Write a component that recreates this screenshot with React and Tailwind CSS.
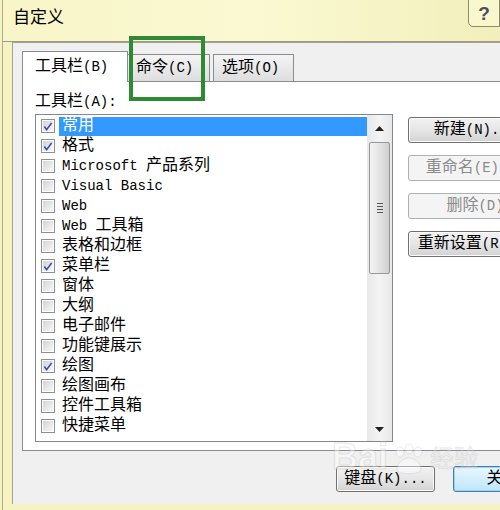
import React from "react";

const ui = '"Liberation Mono", "Noto Sans CJK SC", monospace';

// ascii runs get the narrow mono face, the rest stays CJK
const Mixed = ({ text }) => {
  const parts = text.match(/[\x20-\x7e]+|[^\x20-\x7e]+/g) || [];
  return (
    <span className="whitespace-pre">
      {parts.map((p, i) =>
        /^[\x20-\x7e]+$/.test(p) ? (
          <span key={i} className="text-[14px]">
            {p}
          </span>
        ) : (
          <span key={i}>{p}</span>
        )
      )}
    </span>
  );
};

const items = [
  ["常用", true],
  ["格式", true],
  ["Microsoft 产品系列", false],
  ["Visual Basic", false],
  ["Web", false],
  ["Web 工具箱", false],
  ["表格和边框", false],
  ["菜单栏", true],
  ["窗体", false],
  ["大纲", false],
  ["电子邮件", false],
  ["功能键展示", false],
  ["绘图", true],
  ["绘图画布", false],
  ["控件工具箱", false],
  ["快捷菜单", false],
];

const CheckBox = ({ checked }) => (
  <div className="w-[14px] h-[14px] border border-[#8e8f8f] bg-white p-px shrink-0">
    <div className="w-full h-full bg-gradient-to-br from-[#d4d4d4] to-[#f8f8f8] flex items-center justify-center">
      {checked && (
        <svg width="11" height="11" viewBox="0 0 11 11">
          <path
            d="M1.5 5.5 L4 9 L9.5 1.5"
            fill="none"
            stroke="#3a4ea6"
            strokeWidth="1.8"
          />
        </svg>
      )}
    </div>
  </div>
);

const Button = ({ label, disabled, focused, className = "" }) => (
  <div
    className={`h-[26px] rounded-[3px] border flex items-center justify-center text-[16px] whitespace-nowrap ${
      disabled
        ? "border-[#adb2b5] bg-[#f4f4f4] text-[#8a8a8a]"
        : focused
        ? "border-[#3c7fb1] bg-gradient-to-b from-[#eaf6fd] to-[#bee6fd] text-black shadow-[inset_0_0_0_1px_#9fd2f3]"
        : "border-[#707070] bg-gradient-to-b from-[#f2f2f2] via-[#e6e6e6] to-[#d2d2d2] text-black shadow-[inset_0_0_0_1px_#fbfbfb]"
    } ${className}`}
  >
    <Mixed text={label} />
  </div>
);

const Scrollbar = () => (
  <div className="w-[25px] h-full bg-gradient-to-r from-[#e8e8e8] via-[#f4f4f4] to-[#e8e8e8] flex flex-col items-center">
    <div className="h-[26px] w-full flex items-center justify-center">
      <svg width="9" height="5" viewBox="0 0 9 5">
        <path d="M0 5 L4.5 0 L9 5 Z" fill="#222" />
      </svg>
    </div>
    <div className="mt-px w-[21px] h-[132px] rounded-[2px] border border-[#979797] bg-gradient-to-r from-[#f3f3f3] via-[#e4e4e4] to-[#cfcfcf] flex flex-col items-center justify-center gap-[2px]">
      <div className="w-[6px] h-px bg-[#555]" />
      <div className="w-[6px] h-px bg-[#555]" />
      <div className="w-[6px] h-px bg-[#555]" />
      <div className="w-[6px] h-px bg-[#555]" />
    </div>
    <div className="flex-1" />
    <div className="h-[24px] w-full flex items-center justify-center">
      <svg width="9" height="5" viewBox="0 0 9 5">
        <path d="M0 0 L9 0 L4.5 5 Z" fill="#222" />
      </svg>
    </div>
  </div>
);

export default function App() {
  return (
    <div
      className="relative w-[500px] h-[510px] overflow-hidden bg-[#f6f3c2] pl-[2px]"
      style={{ fontFamily: ui }}
    >
      <div className="h-full border-l border-[#b1ae8c] flex flex-col">
        {/* title bar */}
        <div className="h-[42px] shrink-0 flex justify-between bg-gradient-to-r from-[#f8f5c8] via-[#fbf9d2] to-[#f2efbc] border-b border-[#9e9c80]">
          <span className="ml-[10px] mt-[8px] text-[17px] leading-[22px] text-black">
            自定义
          </span>
          <div className="w-[32px] h-[28px] -mt-px border border-[#8b8a6c] rounded-bl-[5px] bg-[#f9f7cc] flex items-center justify-center">
            <span
              className="text-[19px] font-bold text-[#4d4d66] leading-none"
              style={{ fontFamily: '"Liberation Sans", sans-serif' }}
            >
              ?
            </span>
          </div>
        </div>

        {/* client area */}
        <div className="ml-[9px] w-[540px] h-[462px] shrink-0 bg-[#f0f0f0] border-l border-t border-[#a2a196] pl-[9px] pt-[8px] flex flex-col">
          {/* tabs */}
          <div className="h-[30px] flex items-end relative z-10">
            <div className="w-[106px] h-[31px] -mb-px bg-white border border-b-0 border-[#898c95] flex items-center pl-[12px] text-[16px]">
              <Mixed text="工具栏(B)" />
            </div>
            <div className="w-[82px] h-[27px] border border-b-0 border-l-0 border-[#898c95] bg-gradient-to-b from-[#f4f4f4] to-[#dedede] flex items-center pl-[8px] text-[16px]">
              <Mixed text="命令(C)" />
            </div>
            <div className="w-[3px]" />
            <div className="w-[81px] h-[27px] border border-b-0 border-[#898c95] bg-gradient-to-b from-[#f4f4f4] to-[#dedede] flex items-center pl-[8px] text-[16px]">
              <Mixed text="选项(O)" />
            </div>
          </div>

          {/* tab page */}
          <div className="w-[530px] h-[370px] bg-white border border-[#898c95] pl-[12px] pt-[10px] flex flex-col">
            <div className="h-[20px] flex items-center text-[16px]">
              <Mixed text="工具栏(A):" />
            </div>
            <div className="mt-[2px] flex">
              <div className="w-[358px] h-[328px] border border-[#828790] flex">
                <div className="flex-1 pt-px flex flex-col">
                  {items.map(([name, checked], i) => (
                    <div key={name} className="h-[20px] flex items-center pl-[5px]">
                      <CheckBox checked={checked} />
                      <div
                        className={`ml-[4px] h-[19px] flex items-center pl-[3px] text-[16px] ${
                          i === 0
                            ? "flex-1 bg-[#3399ff] text-white"
                            : "text-black"
                        }`}
                      >
                        <Mixed text={name} />
                      </div>
                    </div>
                  ))}
                </div>
                <Scrollbar />
              </div>
              <div className="ml-[15px] pt-[3px] flex flex-col gap-[12px]">
                <Button label="新建(N)..." className="w-[134px]" />
                <Button label="重命名(E)..." disabled className="w-[134px]" />
                <Button label="删除(D)" disabled className="w-[134px]" />
                <Button label="重新设置(R)..." className="w-[134px]" />
              </div>
            </div>
          </div>

          {/* bottom buttons */}
          <div className="mt-[15px] ml-[314px] flex gap-[18px]">
            <Button label="键盘(K)..." className="w-[109px]" />
            <Button label="关闭" focused className="w-[109px]" />
          </div>
        </div>
      </div>

      {/* annotation box */}
      <div className="absolute left-[129px] top-[36px] w-[76px] h-[65px] border-[4px] border-[#2f8a36] z-20" />

      {/* watermark */}
      <div className="absolute left-[332px] top-[438px] z-20 pointer-events-none opacity-40 flex flex-col items-start">
        <div className="flex items-end gap-[4px]">
          <span
            className="text-[36px] leading-[38px] font-bold text-white"
            style={{ fontFamily: '"Liberation Sans", sans-serif', WebkitTextStroke: "1px #c9c9c9" }}
          >
            Bai
          </span>
          <svg width="34" height="32" viewBox="0 0 34 32">
            <g fill="white" stroke="#c9c9c9" strokeWidth="1">
              <ellipse cx="8" cy="8" rx="4" ry="5" />
              <ellipse cx="17" cy="5" rx="4" ry="5" />
              <ellipse cx="26" cy="8" rx="4" ry="5" />
              <path d="M5 26 C5 18 12 14 17 14 C22 14 29 18 29 26 C29 31 5 31 5 26 Z" />
            </g>
          </svg>
          <span className="text-[24px] leading-[30px] text-white" style={{ WebkitTextStroke: "1px #c9c9c9" }}>
            经验
          </span>
        </div>
      </div>
    </div>
  );
}
